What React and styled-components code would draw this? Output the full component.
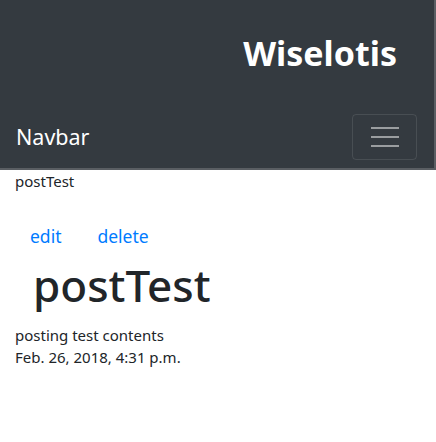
import React from "react";
import styled, { createGlobalStyle } from "styled-components";

const GlobalStyle = createGlobalStyle`
  body {
    margin: 0;
    background: #fff;
    font-family: "Noto Sans", "Open Sans", sans-serif;
    color: #212529;
  }
`;

const Header = styled.header`
  background: #343a40;
  height: 168px;
  border-bottom: 2px solid #5a5e63;
  border-right: 2px solid #5a5e63;
  display: flex;
  flex-direction: column;
`;

const Brand = styled.div`
  height: 105px;
  display: flex;
  align-items: center;
  justify-content: flex-end;
  padding-right: 37px;
  h1 {
    margin: 0;
    color: #fff;
    font-size: 34px;
    font-weight: 700;
    line-height: 1;
  }
`;

const NavRow = styled.nav`
  flex: 1;
  display: flex;
  align-items: center;
  justify-content: space-between;
  padding: 0 17px 0 16px;
`;

const NavBrand = styled.a`
  color: #fff;
  font-size: 21.5px;
  text-decoration: none;
`;

const Toggler = styled.button`
  width: 65px;
  height: 46px;
  background: transparent;
  border: 1px solid rgba(255, 255, 255, 0.1);
  border-radius: 4px;
  display: flex;
  flex-direction: column;
  align-items: center;
  justify-content: center;
  gap: 7px;
  padding: 0;
  span {
    width: 28px;
    height: 2px;
    background: rgba(255, 255, 255, 0.5);
  }
`;

const Content = styled.main`
  padding: 0 15px;
  font-size: 15px;
  line-height: 22px;
`;

const Crumb = styled.div`
  color: #212529;
`;

const Actions = styled.div`
  display: flex;
  gap: 36px;
  padding-left: 15px;
  margin-top: 33px;
`;

const ActionLink = styled.a`
  color: #007bff;
  font-size: 17.5px;
  text-decoration: none;
`;

const Title = styled.h1`
  margin: 12px 0 12px 18px;
  font-size: 44px;
  font-weight: 500;
  line-height: 1.2;
`;

const Meta = styled.p`
  margin: 0;
`;

export default function App() {
  return (
    <>
      <GlobalStyle />
      <Header>
        <Brand>
          <h1>Wiselotis</h1>
        </Brand>
        <NavRow>
          <NavBrand href="#">Navbar</NavBrand>
          <Toggler aria-label="Toggle navigation">
            <span />
            <span />
            <span />
          </Toggler>
        </NavRow>
      </Header>
      <Content>
        <Crumb>postTest</Crumb>
        <Actions>
          <ActionLink href="#">edit</ActionLink>
          <ActionLink href="#">delete</ActionLink>
        </Actions>
        <Title>postTest</Title>
        <Meta>posting test contents</Meta>
        <Meta>Feb. 26, 2018, 4:31 p.m.</Meta>
      </Content>
    </>
  );
}
